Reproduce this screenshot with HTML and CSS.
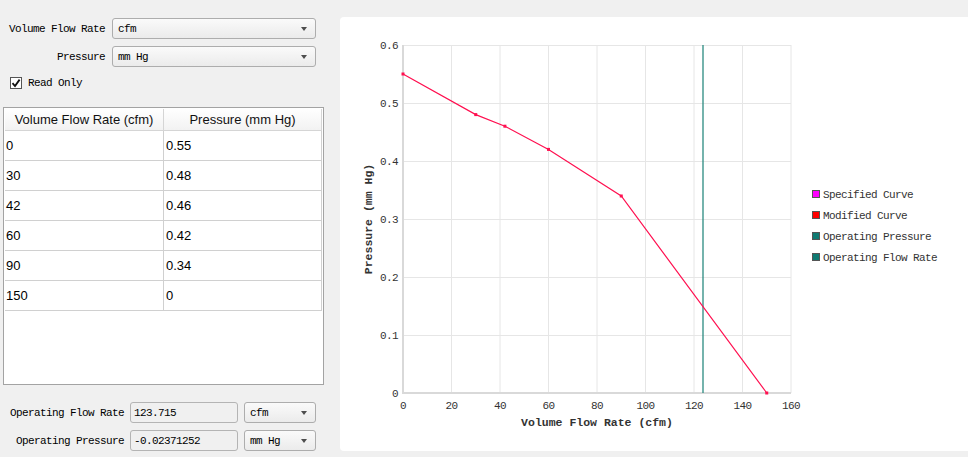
FILE: index.html
```html
<!DOCTYPE html>
<html lang="en">
<head>
  <meta charset="UTF-8" />
  <title>Fan Curve</title>
  <link rel="stylesheet" href="styles.css">
</head>
<body>

<div class="window">

  <!-- Left: units, curve table, operating point -->
  <div class="side">
    <div class="unit-row">
      <span class="unit-label">Volume Flow Rate</span>
      <div class="combo"><span>cfm</span></div>
    </div>
    <div class="unit-row">
      <span class="unit-label">Pressure</span>
      <div class="combo"><span>mm Hg</span></div>
    </div>
    <label class="check-row">
      <span class="check-box">
        <svg width="10" height="10" viewBox="0 0 10 10"><path d="M1.5 5.2 L4 8 L8.6 1.6" fill="none" stroke="#111" stroke-width="1.8"/></svg>
      </span>
      Read Only
    </label>

    <div class="table-frame">
      <div class="curve-table">
        <div class="th">Volume Flow Rate (cfm)</div>
        <div class="th">Pressure (mm Hg)</div>
        <div class="td">0</div><div class="td td-right">0.55</div>
        <div class="td">30</div><div class="td td-right">0.48</div>
        <div class="td">42</div><div class="td td-right">0.46</div>
        <div class="td">60</div><div class="td td-right">0.42</div>
        <div class="td">90</div><div class="td td-right">0.34</div>
        <div class="td">150</div><div class="td td-right">0</div>
      </div>
    </div>

    <div class="op-row">
      <span class="op-label">Operating Flow Rate</span>
      <div class="op-input">123.715</div>
      <div class="combo combo-small"><span>cfm</span></div>
    </div>
    <div class="op-row">
      <span class="op-label">Operating Pressure</span>
      <div class="op-input">-0.02371252</div>
      <div class="combo combo-small"><span>mm Hg</span></div>
    </div>
  </div>

  <!-- Right: chart -->
  <div class="chart-panel">
    <svg class="chart" width="634" height="434" viewBox="340 17 634 434">
      <g class="grid">
        <line x1="451.5" y1="45" x2="451.5" y2="393"/>
        <line x1="500" y1="45" x2="500" y2="393"/>
        <line x1="548.5" y1="45" x2="548.5" y2="393"/>
        <line x1="597" y1="45" x2="597" y2="393"/>
        <line x1="645.5" y1="45" x2="645.5" y2="393"/>
        <line x1="694" y1="45" x2="694" y2="393"/>
        <line x1="742.5" y1="45" x2="742.5" y2="393"/>
        <line x1="791" y1="45" x2="791" y2="393"/>
        <line x1="403" y1="45.5" x2="791" y2="45.5"/>
        <line x1="403" y1="103.5" x2="791" y2="103.5"/>
        <line x1="403" y1="161.5" x2="791" y2="161.5"/>
        <line x1="403" y1="219.5" x2="791" y2="219.5"/>
        <line x1="403" y1="277.5" x2="791" y2="277.5"/>
        <line x1="403" y1="335.5" x2="791" y2="335.5"/>
      </g>
      <g class="axis">
        <line x1="403" y1="45" x2="403" y2="394"/>
        <line x1="402" y1="393" x2="791" y2="393"/>
      </g>

      <g class="ticks">
        <text x="398" y="397" text-anchor="end">0</text>
        <text x="398" y="339" text-anchor="end">0.1</text>
        <text x="398" y="281" text-anchor="end">0.2</text>
        <text x="398" y="223" text-anchor="end">0.3</text>
        <text x="398" y="165" text-anchor="end">0.4</text>
        <text x="398" y="107" text-anchor="end">0.5</text>
        <text x="398" y="49" text-anchor="end">0.6</text>
        <text x="403" y="409" text-anchor="middle">0</text>
        <text x="451.5" y="409" text-anchor="middle">20</text>
        <text x="500" y="409" text-anchor="middle">40</text>
        <text x="548.5" y="409" text-anchor="middle">60</text>
        <text x="597" y="409" text-anchor="middle">80</text>
        <text x="645.5" y="409" text-anchor="middle">100</text>
        <text x="694" y="409" text-anchor="middle">120</text>
        <text x="742.5" y="409" text-anchor="middle">140</text>
        <text x="791" y="409" text-anchor="middle">160</text>
      </g>

      <text class="axis-title" x="597" y="426" text-anchor="middle">Volume Flow Rate (cfm)</text>
      <text class="axis-title" x="0" y="0" text-anchor="middle" transform="translate(372 219) rotate(-90)">Pressure (mm Hg)</text>

      <!-- operating flow rate marker -->
      <line x1="703" y1="45" x2="703" y2="393" stroke="#2a8a80" stroke-width="1.3"/>

      <!-- modified curve -->
      <polyline class="curve" points="403,74 475.75,114.6 504.9,126.2 548.5,149.4 621.25,196 766.75,393"/>
      <g fill="#ff1050">
        <rect x="401.5" y="72.5" width="3" height="3"/>
        <rect x="474.25" y="113.1" width="3" height="3"/>
        <rect x="503.4" y="124.7" width="3" height="3"/>
        <rect x="547" y="147.9" width="3" height="3"/>
        <rect x="619.75" y="194.5" width="3" height="3"/>
        <rect x="765.25" y="391.5" width="3" height="3"/>
      </g>

      <g class="legend">
        <rect x="812.5" y="190.5" width="7" height="7" fill="#ff00ff"/>
        <text x="823" y="198">Specified Curve</text>
        <rect x="812.5" y="211.5" width="7" height="7" fill="#ff0000"/>
        <text x="823" y="219">Modified Curve</text>
        <rect x="812.5" y="232.5" width="7" height="7" fill="#0f7a72"/>
        <text x="823" y="240">Operating Pressure</text>
        <rect x="812.5" y="253.5" width="7" height="7" fill="#0f7a72"/>
        <text x="823" y="261">Operating Flow Rate</text>
      </g>
    </svg>
  </div>

</div>

</body>
</html>
```

FILE: styles.css
```css
body {
  margin: 0;
  padding: 0;
  width: 968px;
  height: 457px;
  overflow: hidden;
  background: #f0f0f0;
  font-family: "Liberation Mono", monospace;
  font-size: 11px;
  letter-spacing: -0.6px;
  color: #000;
}

.window {
  display: flex;
  height: 457px;
}

/* ---------- left side ---------- */

.side {
  width: 330px;
  flex: none;
  padding-top: 18px;
  box-sizing: border-box;
  display: flex;
  flex-direction: column;
}

.unit-row {
  display: flex;
  align-items: center;
  height: 21px;
  margin-bottom: 7px;
}

.unit-label {
  width: 105px;
  margin-right: 7px;
  text-align: right;
}

.combo {
  width: 204px;
  height: 21px;
  box-sizing: border-box;
  display: flex;
  align-items: center;
  justify-content: space-between;
  padding: 0 8px 0 5px;
  border: 1px solid #adadad;
  border-radius: 3px;
  background: linear-gradient(#fafafa, #ebebeb);
}

.combo::after {
  content: "";
  width: 0;
  height: 0;
  border-left: 3.5px solid transparent;
  border-right: 3.5px solid transparent;
  border-top: 4px solid #4d4d4d;
}

.combo-small {
  width: 72px;
}

.check-row {
  display: flex;
  align-items: center;
  height: 12px;
  margin-top: 3px;
  padding-left: 10px;
}

.check-box {
  width: 12px;
  height: 12px;
  box-sizing: border-box;
  border: 1px solid #555;
  background: #fff;
  margin-right: 6px;
  display: flex;
  align-items: center;
  justify-content: center;
}

.table-frame {
  margin: 18px 0 0 3px;
  width: 321px;
  height: 278px;
  box-sizing: border-box;
  border: 1px solid #a3a3a3;
  padding: 1px;
  background: #fff;
}

.curve-table {
  display: grid;
  grid-template-columns: 159px 158px;
  grid-template-rows: 22px;
  grid-auto-rows: 30px;
  font-family: "Liberation Sans", Arial, sans-serif;
  font-size: 13px;
  letter-spacing: 0;
}

.th {
  box-sizing: border-box;
  display: flex;
  align-items: center;
  justify-content: center;
  border-right: 1px solid #d5d5d5;
  border-bottom: 1px solid #d5d5d5;
  background: linear-gradient(#ffffff, #f2f2f2);
  color: #111;
}

.td {
  box-sizing: border-box;
  display: flex;
  align-items: center;
  padding-left: 1px;
  border-right: 1px solid #d0d0d0;
  border-bottom: 1px solid #d0d0d0;
}

.td-right {
  padding-left: 2px;
}

.op-row {
  display: flex;
  align-items: center;
  height: 21px;
}

.table-frame + .op-row {
  margin-top: 17px;
  margin-bottom: 7px;
}

.op-label {
  width: 124px;
  margin-right: 6px;
  text-align: right;
}

.op-input {
  width: 108px;
  height: 21px;
  box-sizing: border-box;
  margin-right: 6px;
  padding-left: 3px;
  display: flex;
  align-items: center;
  border: 1px solid #b4b4b4;
  border-radius: 3px;
  background: #f0f0f0;
}

/* ---------- chart ---------- */

.chart-panel {
  flex: none;
  width: 634px;
  height: 434px;
  margin: 17px 0 0 10px;
  background: #fff;
  border-radius: 4px;
  overflow: hidden;
}

.chart {
  display: block;
  font-family: "Liberation Mono", monospace;
  font-size: 11px;
}

.grid line {
  stroke: #e6e6e6;
  stroke-width: 1;
}

.axis line {
  stroke: #d9d9d9;
  stroke-width: 2;
}

.ticks text {
  fill: #333;
  letter-spacing: -0.6px;
}

.axis-title {
  fill: #333;
  font-weight: bold;
  font-size: 11.5px;
  letter-spacing: 0;
}

.curve {
  fill: none;
  stroke: #ff1050;
  stroke-width: 1.2;
}

.legend rect {
  stroke: #555;
  stroke-width: 1;
}

.legend text {
  fill: #333;
  letter-spacing: -0.6px;
}
```
